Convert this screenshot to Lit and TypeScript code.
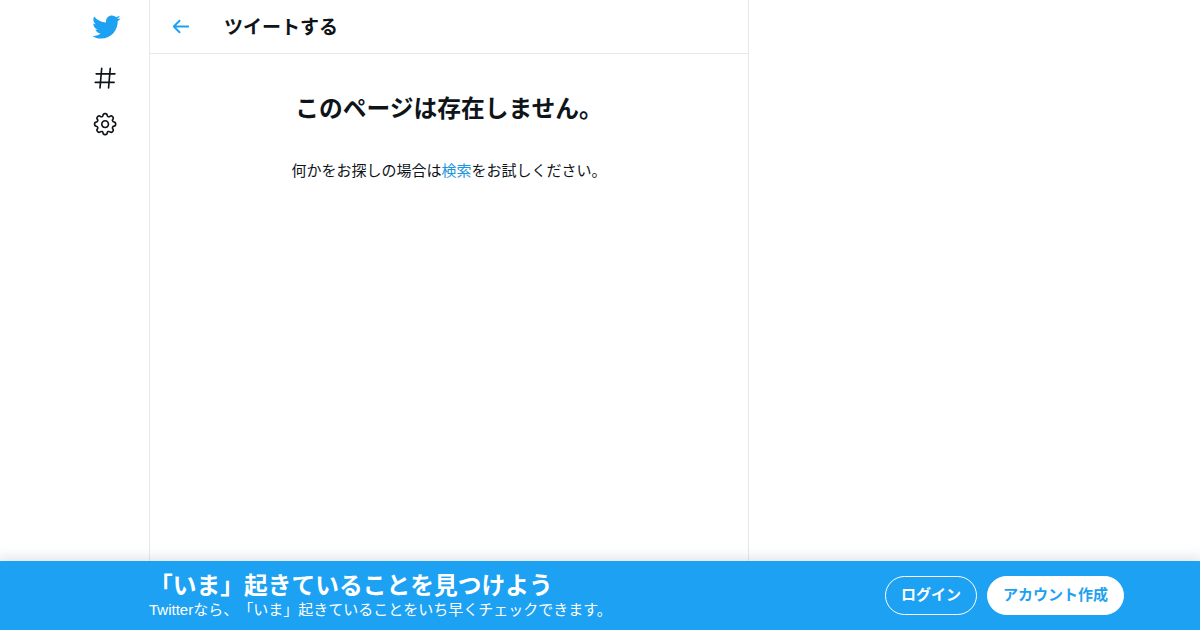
import { LitElement, css, html, svg } from 'lit';
import { customElement } from 'lit/decorators.js';

const bird = svg`<path d="M23.643 4.937c-.835.37-1.732.62-2.675.733.962-.576 1.7-1.49 2.048-2.578-.9.534-1.897.922-2.958 1.13-.85-.904-2.06-1.47-3.4-1.47-2.572 0-4.658 2.086-4.658 4.66 0 .364.042.718.12 1.06-3.873-.195-7.304-2.05-9.602-4.868-.4.69-.63 1.49-.63 2.342 0 1.616.823 3.043 2.072 3.878-.764-.025-1.482-.234-2.11-.583v.06c0 2.257 1.605 4.14 3.737 4.568-.392.106-.803.162-1.227.162-.3 0-.593-.028-.877-.082.593 1.85 2.313 3.198 4.352 3.234-1.595 1.25-3.604 1.995-5.786 1.995-.376 0-.747-.022-1.112-.065 2.062 1.323 4.51 2.093 7.14 2.093 8.57 0 13.255-7.098 13.255-13.254 0-.2-.005-.402-.014-.602.91-.658 1.7-1.477 2.323-2.41z"/>`;

const hash = svg`<path d="M21 7.337h-3.93l.372-4.272c.036-.412-.27-.775-.682-.812-.417-.03-.776.27-.812.683l-.383 4.4h-6.32l.37-4.27c.037-.413-.27-.776-.68-.813-.42-.03-.777.27-.813.683l-.382 4.4H3.782c-.414 0-.75.337-.75.75s.336.75.75.75H7.61l-.55 6.327H3c-.414 0-.75.336-.75.75s.336.75.75.75h3.93l-.372 4.272c-.036.412.27.775.682.812l.066.003c.385 0 .712-.295.746-.686l.383-4.4h6.32l-.37 4.27c-.036.413.27.776.682.813l.066.003c.385 0 .712-.295.746-.686l.382-4.4h3.957c.413 0 .75-.337.75-.75s-.337-.75-.75-.75H16.39l.55-6.327H21c.414 0 .75-.336.75-.75s-.336-.75-.75-.75zm-6.115 7.826h-6.32l.55-6.326h6.32l-.55 6.326z"/>`;

const gear = svg`
    <path d="M12 8.21c-2.09 0-3.79 1.7-3.79 3.79s1.7 3.79 3.79 3.79 3.79-1.7 3.79-3.79-1.7-3.79-3.79-3.79zm0 6.08c-1.262 0-2.29-1.026-2.29-2.29S10.74 9.71 12 9.71s2.29 1.026 2.29 2.29-1.028 2.29-2.29 2.29z"/>
    <path d="M12.36 22.375h-.722c-1.183 0-2.154-.888-2.262-2.064l-.014-.147c-.025-.287-.207-.533-.472-.644-.286-.12-.582-.065-.798.115l-.116.097c-.868.725-2.253.663-3.06-.14l-.51-.51c-.836-.84-.896-2.154-.14-3.06l.098-.118c.186-.222.23-.523.122-.787-.11-.272-.358-.454-.646-.48l-.15-.014c-1.18-.107-2.067-1.08-2.067-2.262v-.722c0-1.183.888-2.154 2.064-2.262l.156-.014c.285-.025.53-.207.642-.473.11-.27.065-.573-.12-.795l-.094-.116c-.757-.908-.698-2.223.137-3.06l.512-.512c.804-.804 2.188-.865 3.06-.14l.116.098c.218.184.528.23.79.122.27-.112.452-.358.477-.643l.014-.153c.107-1.18 1.08-2.066 2.262-2.066h.722c1.183 0 2.154.888 2.262 2.064l.014.156c.025.285.206.53.472.64.277.117.58.062.794-.117l.12-.102c.867-.723 2.254-.662 3.06.14l.51.512c.836.838.896 2.153.14 3.06l-.1.118c-.188.22-.234.522-.123.788.112.27.36.45.646.478l.152.014c1.18.107 2.067 1.08 2.067 2.262v.723c0 1.183-.888 2.154-2.064 2.262l-.155.014c-.284.024-.53.205-.64.47-.113.272-.067.574.117.795l.1.12c.756.905.696 2.22-.14 3.06l-.51.51c-.807.804-2.19.864-3.06.14l-.115-.096c-.217-.183-.53-.23-.79-.122-.273.114-.455.36-.48.646l-.014.15c-.107 1.173-1.08 2.06-2.262 2.06zm-3.773-4.42c.3 0 .593.06.87.175.79.328 1.324 1.054 1.4 1.896l.014.147c.037.4.367.7.77.7h.722c.4 0 .73-.3.768-.7l.014-.148c.076-.842.61-1.567 1.392-1.892.793-.33 1.696-.182 2.333.35l.113.094c.178.148.366.18.493.18.206 0 .4-.08.546-.227l.51-.51c.284-.284.305-.73.048-1.038l-.1-.12c-.542-.65-.677-1.54-.352-2.323.326-.79 1.052-1.32 1.894-1.397l.155-.014c.397-.037.7-.367.7-.77v-.722c0-.4-.303-.73-.702-.768l-.152-.014c-.846-.078-1.57-.61-1.895-1.393-.326-.788-.19-1.678.353-2.327l.1-.118c.257-.31.236-.756-.048-1.04l-.51-.51c-.146-.147-.34-.227-.546-.227-.127 0-.315.032-.492.18l-.12.1c-.634.528-1.55.67-2.322.354-.788-.327-1.32-1.052-1.397-1.896l-.014-.155c-.035-.397-.365-.7-.767-.7h-.723c-.4 0-.73.303-.768.702l-.014.152c-.076.843-.608 1.568-1.39 1.893-.787.326-1.693.183-2.33-.35l-.118-.096c-.18-.15-.368-.18-.495-.18-.206 0-.4.08-.546.226l-.512.51c-.282.284-.303.73-.046 1.038l.1.118c.54.653.677 1.544.352 2.325-.327.788-1.052 1.32-1.895 1.397l-.156.014c-.397.037-.7.367-.7.77v.722c0 .4.303.73.702.768l.15.014c.848.078 1.573.612 1.897 1.396.325.786.19 1.675-.353 2.325l-.096.115c-.26.31-.238.756.046 1.04l.51.51c.146.147.34.227.546.227.127 0 .315-.03.492-.18l.116-.096c.406-.336.923-.524 1.453-.524z"/>
`;

const arrow = svg`<path d="M20 11H7.414l4.293-4.293c.39-.39.39-1.023 0-1.414s-1.023-.39-1.414 0l-6 6c-.39.39-.39 1.023 0 1.414l6 6c.195.195.45.293.707.293s.512-.098.707-.293c.39-.39.39-1.023 0-1.414L7.414 13H20c.553 0 1-.447 1-1s-.447-1-1-1z"/>`;

@customElement('app-root')
export class AppRoot extends LitElement {
    static get styles() {
        //language=CSS
        return css`
            :host {
                display: flex;
                flex-direction: column;
                height: 100vh;
                overflow: hidden;
                background: #fff;
                color: #0f1419;
                font-family: "Liberation Sans", "Noto Sans CJK JP", sans-serif;
                font-size: 15px;
                line-height: 20px;
                text-spacing-trim: space-all;
            }

            * {
                box-sizing: border-box;
            }

            h1, h2, p {
                margin: 0;
            }

            svg {
                display: block;
                fill: currentColor;
            }

            a {
                color: inherit;
                text-decoration: none;
            }

            .page {
                display: flex;
                flex: 1;
                min-height: 0;
            }

            nav {
                display: flex;
                flex-direction: column;
                align-items: center;
                width: 149px;
                padding: 4px 0 0 61px;
            }

            nav a {
                display: grid;
                place-items: center;
                width: 46px;
                height: 46px;
            }

            nav .logo {
                height: 51px;
                padding: 0 0 5px 1px;
                color: #1da1f2;
            }

            nav svg {
                width: 26.25px;
                height: 26.25px;
            }

            nav .logo svg {
                width: 30px;
                height: 30px;
            }

            main {
                width: 600px;
                border: solid #e6e9ea;
                border-width: 0 1px;
            }

            header {
                display: flex;
                align-items: center;
                height: 54px;
                padding: 0 19px;
                border-bottom: 1px solid #e6e9ea;
            }

            .back {
                width: 55px;
                color: #1da1f2;
            }

            .back svg {
                width: 23px;
                height: 23px;
            }

            h2 {
                font-size: 19px;
                line-height: 24px;
            }

            header h2 {
                padding-top: 2px;
            }

            .missing {
                display: flex;
                flex-direction: column;
                align-items: center;
                gap: 37px;
                padding-top: 40px;
            }

            .missing h1 {
                font-size: 23.75px;
                line-height: 30px;
            }

            .missing a {
                color: #1b95e0;
            }

            .banner {
                display: flex;
                align-items: center;
                justify-content: space-between;
                height: 69px;
                padding: 0 76px 0 149px;
                background: #1da1f2;
                color: #fff;
                box-shadow: 0 0 12px 3px rgba(101, 119, 134, 0.22);
                z-index: 1;
            }

            .banner h2 {
                padding-top: 1px;
                font-size: 23.75px;
                line-height: 28px;
            }

            .actions {
                display: flex;
                gap: 10px;
            }

            .button {
                height: 39px;
                padding: 0 15px;
                border: 1px solid #fff;
                border-radius: 20px;
                font-weight: bold;
                line-height: 35px;
            }

            .filled {
                background: #fff;
                color: #1da1f2;
            }
        `;
    }

    protected render() {
        return html`
            <div class="page">
                <nav>
                    <a class="logo"><svg viewBox="0 0 24 24">${ bird }</svg></a>
                    <a><svg viewBox="0 0 24 24">${ hash }</svg></a>
                    <a><svg viewBox="0 0 24 24">${ gear }</svg></a>
                </nav>
                <main>
                    <header>
                        <a class="back"><svg viewBox="0 0 24 24">${ arrow }</svg></a>
                        <h2>ツイートする</h2>
                    </header>
                    <section class="missing">
                        <h1>このページは存在しません。</h1>
                        <p>何かをお探しの場合は<a>検索</a>をお試しください。</p>
                    </section>
                </main>
            </div>
            <div class="banner">
                <div>
                    <h2>「いま」起きていることを見つけよう</h2>
                    <p>Twitterなら、「いま」起きていることをいち早くチェックできます。</p>
                </div>
                <div class="actions">
                    <a class="button">ログイン</a>
                    <a class="button filled">アカウント作成</a>
                </div>
            </div>
        `;
    }
}
